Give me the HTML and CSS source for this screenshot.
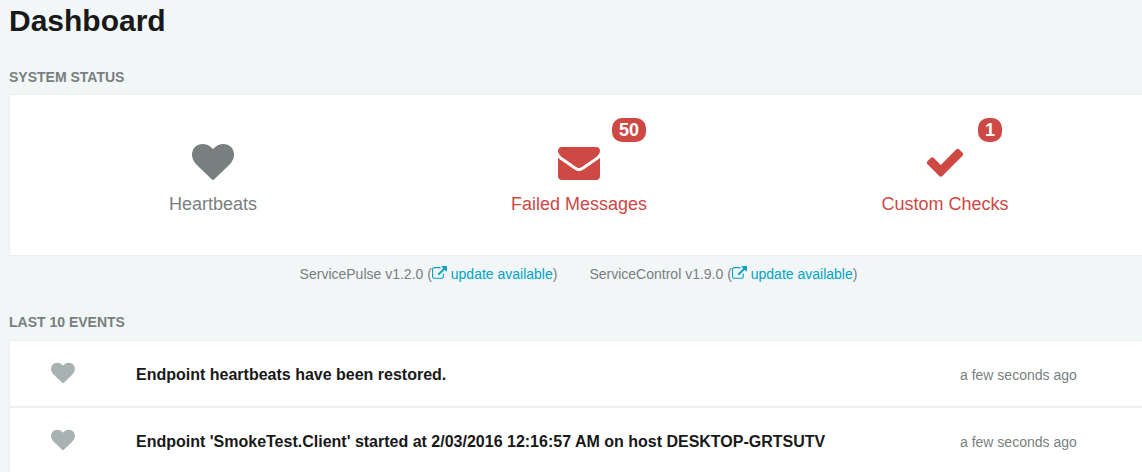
FILE: index.html
```html
<!DOCTYPE html>
<html lang="en">
<head>
<meta charset="utf-8">
<title>Dashboard</title>
<link rel="stylesheet" href="styles.css">
</head>
<body>
<svg class="sprite" aria-hidden="true">
  <symbol id="heart" viewBox="0 0 1792 1792"><path d="M896 1664q-26 0-44-18l-624-602q-10-8-27.500-26t-55.500-65.500-68-97.500-53.500-121-23.500-138q0-220 127-344t351-124q62 0 126.500 21.500t120 58 95.500 68.500 76 68q36-36 76-68t95.500-68.500 120-58 126.500-21.500q224 0 351 124t127 344q0 221-229 450l-623 600q-18 18-44 18z"/></symbol>
  <symbol id="envelope" viewBox="0 0 1792 1792"><path d="M1792 710v794q0 66-47 113t-113 47h-1472q-66 0-113-47t-47-113v-794q44 49 101 87 362 246 497 345 57 42 92.500 65.500t94.500 48 110 24.500h2q51 0 110-24.500t94.500-48 92.500-65.500q170-123 498-345 57-39 100-87zm0-294q0 79-49 151t-122 123q-376 261-468 325-10 7-42.500 31t-54 38.500-52 32.500-57.500 27-50 9h-2q-23 0-50-9t-57.500-27-52-32.500-54-38.500-42.500-31q-91-64-262-182.500t-205-142.500q-62-42-117-115.500t-55-136.500q0-78 41.500-130t118.500-52h1472q65 0 112.500 47t47.500 113z"/></symbol>
  <symbol id="check" viewBox="0 0 1792 1792"><path d="M1671 566q0 40-28 68l-724 724-136 136q-28 28-68 28t-68-28l-136-136-362-362q-28-28-28-68t28-68l136-136q28-28 68-28t68 28l294 295 656-657q28-28 68-28t68 28l136 136q28 28 28 68z"/></symbol>
  <symbol id="external" viewBox="0 0 1792 1792"><path d="M1408 928v320q0 119-84.500 203.500t-203.500 84.500h-832q-119 0-203.500-84.500t-84.500-203.500v-832q0-119 84.500-203.500t203.500-84.500h704q14 0 23 9t9 23v64q0 14-9 23t-23 9h-704q-66 0-113 47t-47 113v832q0 66 47 113t113 47h832q66 0 113-47t47-113v-320q0-14 9-23t23-9h64q14 0 23 9t9 23zm384-864v512q0 26-19 45t-45 19-45-19l-176-176-652 652q-10 10-23 10t-23-10l-114-114q-10-10-10-23t10-23l652-652-176-176q-19-19-19-45t19-45 45-19h512q26 0 45 19t19 45z"/></symbol>
</svg>
<main class="page">
  <h1 class="title">Dashboard</h1>

  <section class="section">
    <h2 class="heading">SYSTEM STATUS</h2>
    <div class="status">
      <a class="tile" href="#heartbeats">
        <span class="tile-icon"><svg><use href="#heart"/></svg></span>
        <span>Heartbeats</span>
      </a>
      <a class="tile danger" href="#failed">
        <span class="tile-icon"><svg><use href="#envelope"/></svg><span class="badge">50</span></span>
        <span>Failed Messages</span>
      </a>
      <a class="tile danger" href="#checks">
        <span class="tile-icon"><svg><use href="#check"/></svg><span class="badge">1</span></span>
        <span>Custom Checks</span>
      </a>
    </div>
    <div class="versions">
      <span>ServicePulse v1.2.0 (<a class="link" href="#pulse"><svg><use href="#external"/></svg> update available</a>)</span>
      <span>ServiceControl v1.9.0 (<a class="link" href="#control"><svg><use href="#external"/></svg> update available</a>)</span>
    </div>
  </section>

  <section class="section">
    <h2 class="heading">LAST 10 EVENTS</h2>
    <div class="event">
      <svg class="event-icon"><use href="#heart"/></svg>
      <span class="event-text">Endpoint heartbeats have been restored.</span>
      <span class="event-time">a few seconds ago</span>
    </div>
    <div class="event">
      <svg class="event-icon"><use href="#heart"/></svg>
      <span class="event-text">Endpoint 'SmokeTest.Client' started at 2/03/2016 12:16:57 AM on host DESKTOP-GRTSUTV</span>
      <span class="event-time">a few seconds ago</span>
    </div>
  </section>
</main>
</body>
</html>
```
FILE: styles.css
```css
* {
  box-sizing: border-box;
}

body {
  margin: 0;
  background: #f2f6f7;
  color: #777f7f;
  font: 14px/20px Arial, "Liberation Sans", sans-serif;
}

svg {
  fill: currentColor;
}

.sprite {
  display: none;
}

.page {
  padding: 4px 0 0 9px;
}

.title {
  margin: 0;
  color: #181919;
  font-size: 30px;
  line-height: 33px;
}

.section {
  padding-top: 30px;
}

.section + .section {
  padding-top: 28px;
}

.heading {
  margin: 0 0 7px;
  font-size: 14px;
  line-height: 20px;
}

.section + .section .heading {
  margin-bottom: 8px;
}

.status {
  display: grid;
  grid-template-columns: repeat(3, 1fr);
  padding: 46px 14px 38px 20px;
  background: #fff;
  border: 1px solid #eee;
  border-right: 0;
}

.tile {
  display: flex;
  flex-direction: column;
  align-items: center;
  gap: 8px;
  color: #777f7f;
  font-size: 18px;
  line-height: 26px;
  text-decoration: none;
}

.danger {
  color: #ce4844;
}

.tile-icon {
  position: relative;
}

.tile-icon svg {
  display: block;
  width: 42px;
  height: 42px;
}

.badge {
  position: absolute;
  bottom: 41px;
  left: 54px;
  padding: 0 7px;
  border-radius: 10px;
  background: #ce4844;
  color: #fff;
  font-weight: bold;
  line-height: 24px;
}

.versions {
  display: flex;
  justify-content: center;
  gap: 32px;
  padding: 8px 0 0 6px;
}

.link {
  color: #00a3c4;
  text-decoration: none;
}

.link svg {
  width: 15px;
  height: 15px;
  vertical-align: -2px;
}

.event {
  display: grid;
  grid-template-columns: 106px 1fr 182px;
  align-items: center;
  min-height: 67px;
  padding-top: 2px;
  background: #fff;
  border: 1px solid #eee;
  border-right: 0;
}

.event-icon {
  justify-self: center;
  width: 24px;
  height: 24px;
  margin-bottom: 3px;
  color: #a8b3b1;
}

.event-text {
  padding-left: 20px;
  color: #181919;
  font-size: 16px;
  font-weight: bold;
}

.event-time {
  font-size: 14px;
}
```
